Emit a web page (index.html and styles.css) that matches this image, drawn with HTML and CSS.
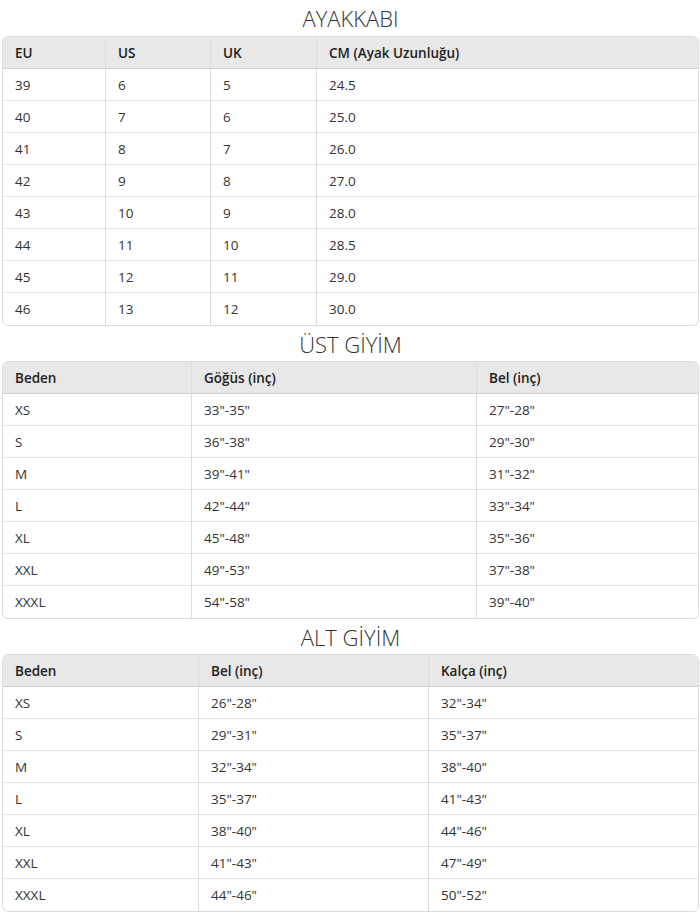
FILE: index.html
```html
<!DOCTYPE html>
<html lang="tr">
<head>
<meta charset="utf-8">
<link rel="stylesheet" href="styles.css">
</head>
<body>
<div class="page">
  <h2 class="title title-first">AYAKKABI</h2>
  <table class="size-table">
    <colgroup><col class="c1a"><col class="c1b"><col class="c1c"><col></colgroup>
    <thead><tr><th>EU</th><th>US</th><th>UK</th><th>CM (Ayak Uzunluğu)</th></tr></thead>
    <tbody>
      <tr><td>39</td><td>6</td><td>5</td><td>24.5</td></tr>
      <tr><td>40</td><td>7</td><td>6</td><td>25.0</td></tr>
      <tr><td>41</td><td>8</td><td>7</td><td>26.0</td></tr>
      <tr><td>42</td><td>9</td><td>8</td><td>27.0</td></tr>
      <tr><td>43</td><td>10</td><td>9</td><td>28.0</td></tr>
      <tr><td>44</td><td>11</td><td>10</td><td>28.5</td></tr>
      <tr><td>45</td><td>12</td><td>11</td><td>29.0</td></tr>
      <tr><td>46</td><td>13</td><td>12</td><td>30.0</td></tr>
    </tbody>
  </table>

  <h2 class="title">ÜST GİYİM</h2>
  <table class="size-table">
    <colgroup><col class="c2a"><col class="c2b"><col></colgroup>
    <thead><tr><th>Beden</th><th>Göğüs (inç)</th><th>Bel (inç)</th></tr></thead>
    <tbody>
      <tr><td>XS</td><td>33"-35"</td><td>27"-28"</td></tr>
      <tr><td>S</td><td>36"-38"</td><td>29"-30"</td></tr>
      <tr><td>M</td><td>39"-41"</td><td>31"-32"</td></tr>
      <tr><td>L</td><td>42"-44"</td><td>33"-34"</td></tr>
      <tr><td>XL</td><td>45"-48"</td><td>35"-36"</td></tr>
      <tr><td>XXL</td><td>49"-53"</td><td>37"-38"</td></tr>
      <tr><td>XXXL</td><td>54"-58"</td><td>39"-40"</td></tr>
    </tbody>
  </table>

  <h2 class="title">ALT GİYİM</h2>
  <table class="size-table">
    <colgroup><col class="c3a"><col class="c3b"><col></colgroup>
    <thead><tr><th>Beden</th><th>Bel (inç)</th><th>Kalça (inç)</th></tr></thead>
    <tbody>
      <tr><td>XS</td><td>26"-28"</td><td>32"-34"</td></tr>
      <tr><td>S</td><td>29"-31"</td><td>35"-37"</td></tr>
      <tr><td>M</td><td>32"-34"</td><td>38"-40"</td></tr>
      <tr><td>L</td><td>35"-37"</td><td>41"-43"</td></tr>
      <tr><td>XL</td><td>38"-40"</td><td>44"-46"</td></tr>
      <tr><td>XXL</td><td>41"-43"</td><td>47"-49"</td></tr>
      <tr><td>XXXL</td><td>44"-46"</td><td>50"-52"</td></tr>
    </tbody>
  </table>
</div>
</body>
</html>
```

FILE: styles.css
```css
* { box-sizing: border-box; }
html, body { margin: 0; padding: 0; background: #fff; }
body {
  font-family: "Open Sans", "Noto Sans", sans-serif;
  color: #222;
}
.page {
  padding: 0 1px 0 2px;
}
.title {
  margin: 0;
  height: 35px;
  line-height: 36px;
  text-align: center;
  font-size: 22px;
  font-weight: 300;
  color: #333;
}
.title-first { height: 36px; line-height: 37px; }
.size-table {
  width: 100%;
  table-layout: fixed;
  border-collapse: separate;
  border-spacing: 0;
  border: 1px solid #dcdcdc;
  border-radius: 6px;
  overflow: hidden;
  font-size: 13.5px;
}
.size-table th,
.size-table td {
  height: 32px;
  padding: 0 12px;
  text-align: left;
  vertical-align: middle;
  border-right: 1px solid #dcdcdc;
  border-bottom: 1px solid #e3e3e3;
}
.size-table th:last-child,
.size-table td:last-child { border-right: none; }
.size-table tbody tr:last-child td { border-bottom: none; }
.size-table th {
  background: #e8e8e8;
  font-weight: 600;
  color: #222;
  border-bottom: 1px solid #cfcfcf;
}
.size-table td { color: #333; }
.c1a { width: 103px; }
.c1b { width: 105px; }
.c1c { width: 106px; }
.c2a { width: 189px; }
.c2b { width: 285px; }
.c3a { width: 196px; }
.c3b { width: 230px; }
```
